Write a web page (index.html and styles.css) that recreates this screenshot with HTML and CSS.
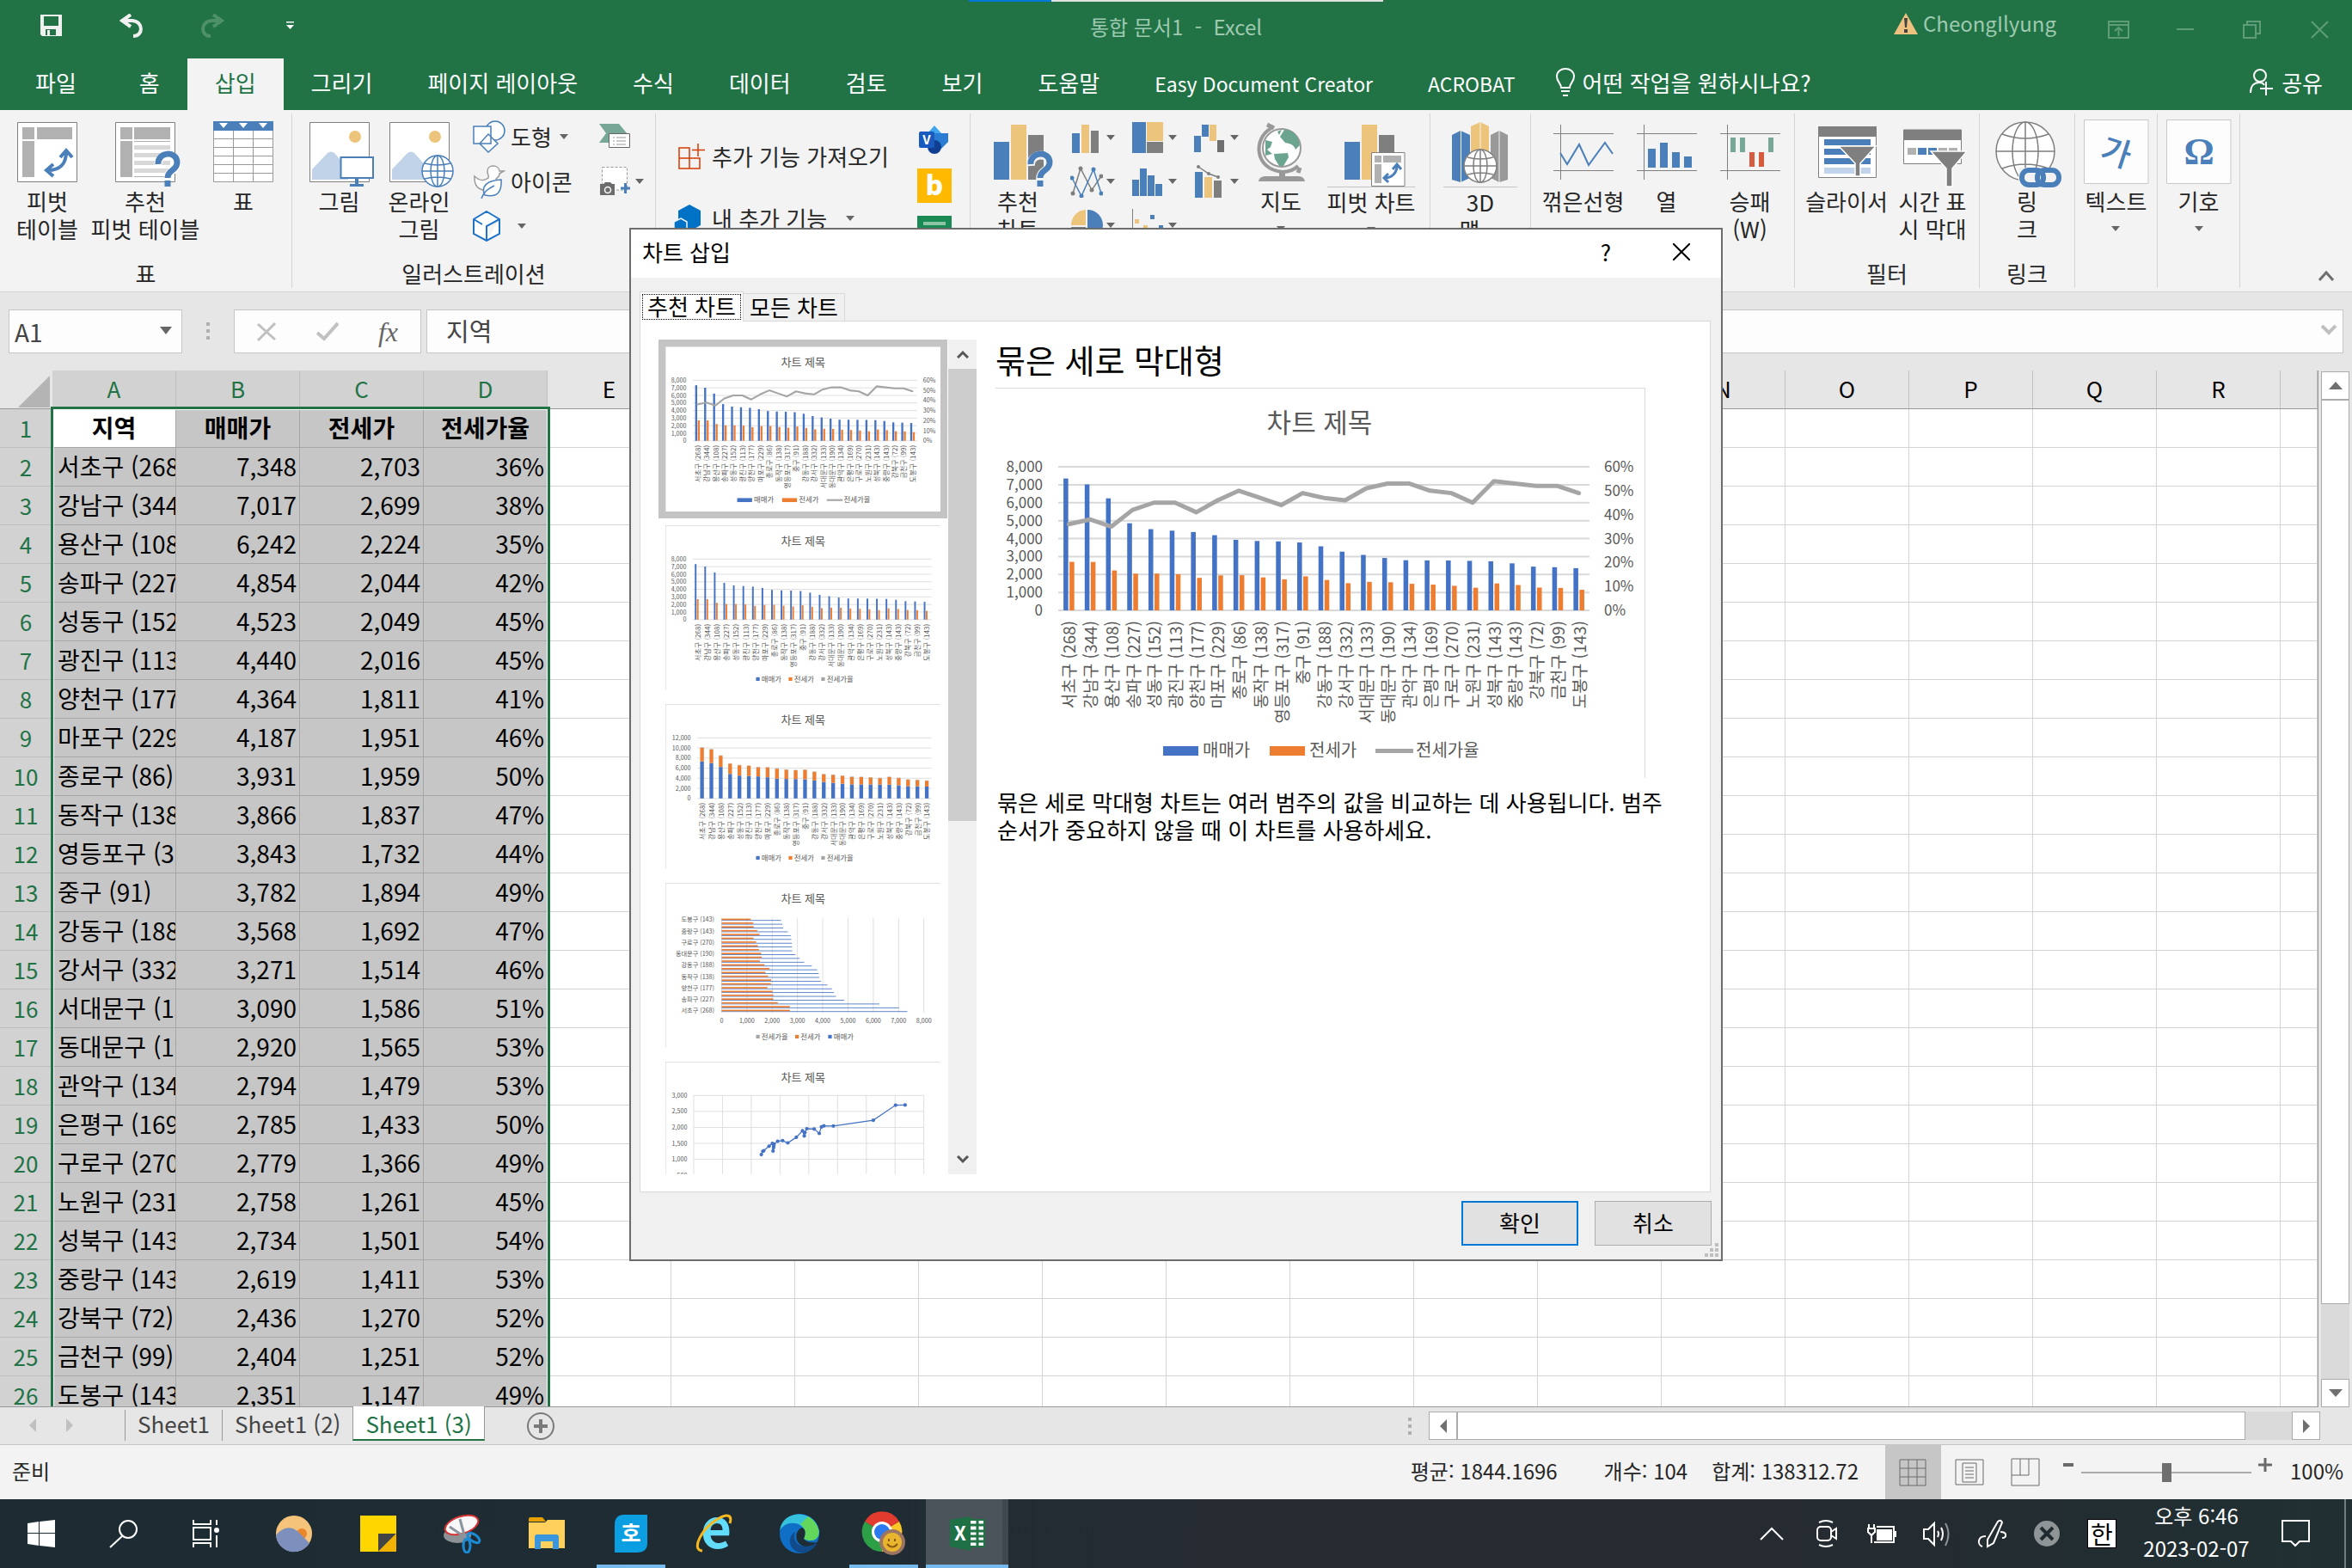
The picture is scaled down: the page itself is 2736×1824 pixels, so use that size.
FILE: index.html
```html
<!DOCTYPE html>
<html lang="ko">
<head>
    <meta charset="UTF-8">
    <meta name="viewport" content="width=device-width, initial-scale=1.0">
    <title>통합 문서1 - Excel</title>
    <link rel="stylesheet" href="styles.css">
</head>
<body>
    <header class="titlebar">
        <div class="progress-strip"><span></span></div>
        <div class="quick-access">
            <button aria-label="저장"><svg width="26" height="26" viewBox="0 0 26 26"><path fill="#f0f0f0" fill-rule="evenodd" d="M0 0H25V25H2L0 23ZM4 2V13H21V2ZM6 17V24H8V18H11V24H18V17Z"/></svg></button>
            <button aria-label="실행 취소"><svg width="28" height="28" viewBox="0 0 28 28"><path d="M13 1L3 8L13 15M4 8H15C28 9 28 26 16 26" fill="none" stroke="#f0f0f0" stroke-width="4"/></svg></button>
            <button aria-label="다시 실행"><svg width="28" height="28" viewBox="0 0 28 28"><path d="M15 1L25 8L15 15M24 8H13C0 9 0 26 12 26" fill="none" stroke="#4d9069" stroke-width="4"/></svg></button>
            <button class="more" aria-label="사용자 지정"><svg width="10" height="10" viewBox="0 0 10 10"><path d="M0 0H9V1.500H0ZM0 4H9L4.500 9Z" fill="#fff"/></svg></button>
        </div>
        <div class="doc-title">통합 문서1&nbsp; -&nbsp; Excel</div>
        <div class="title-right">
            <div class="account">
                <svg width="28" height="25" viewBox="0 0 28 25"><path d="M14 0L28 25H0Z" fill="#eec17e"/><path d="M12 6H16L15 17H13ZM12 19H16V23H12Z" fill="#444"/></svg>
                <span>CheongIlyung</span>
            </div>
            <div class="window-buttons">
                <button aria-label="리본 표시 옵션"><svg width="26" height="22" viewBox="0 0 26 22"><path d="M1 1H24V20H1ZM1 5H24M12.500 18V8M8 12L12.500 8L17 12" /></svg></button>
                <button aria-label="최소화"><svg width="26" height="22" viewBox="0 0 26 22"><path d="M2 10H22"/></svg></button>
                <button aria-label="이전 크기로"><svg width="26" height="22" viewBox="0 0 26 22"><path d="M2 5H16V20H2ZM6 5V1H21V15H16"/></svg></button>
                <button aria-label="닫기"><svg width="26" height="22" viewBox="0 0 26 22"><path d="M3 1L22 20M22 1L3 20"/></svg></button>
            </div>
        </div>
    </header>

    <nav class="tabs">
        <button class="file">파일</button>
        <button>홈</button>
        <button class="active">삽입</button>
        <button>그리기</button>
        <button>페이지 레이아웃</button>
        <button>수식</button>
        <button>데이터</button>
        <button>검토</button>
        <button>보기</button>
        <button>도움말</button>
        <button class="latin">Easy Document Creator</button>
        <button class="latin">ACROBAT</button>
        <button class="tell-me">
            <svg width="24" height="34" viewBox="0 0 24 34"><path d="M7 23C7 18 2 16 2 10C2 -2 22 -2 22 10C22 16 17 18 17 23ZM7 27H17M9 32H15" fill="none" stroke="#fff" stroke-width="2"/></svg>
            어떤 작업을 원하시나요?
        </button>
        <button class="share">
            <svg width="30" height="32" viewBox="0 0 30 32"><path d="M2 28C2 20 6 16 12 16C15 16 17 17 18 19M20 15V31M13 23H28" fill="none" stroke="#fff" stroke-width="2"/><circle cx="13" cy="8" r="7" fill="none" stroke="#fff" stroke-width="2"/></svg>
            공유
        </button>
    </nav>

    <section class="ribbon">
        <div class="group g-tables">
            <div class="group-body">
                <button class="big">
                    <svg class="icon" viewBox="0 0 80 78"><path d="M5.500 1.500H74.500V70.500H5.500Z" fill="#fff" stroke="#7f7f7f"/><path d="M11 7H25V21H11ZM28 7H69V21H28ZM11 23H25V65H11Z" fill="#b1b1b1"/><path d="M41 57C54 57 62 50 62 36M55 42L62 34L69 42M47 50L39 57L47 64" fill="none" stroke="#4a7fb9" stroke-width="4"/></svg>
                    <span>피벗<br>테이블</span>
                </button>
                <button class="big wide">
                    <svg class="icon" viewBox="0 0 80 78"><path d="M5.500 1.500H74.500V70.500H5.500Z" fill="#fff" stroke="#7f7f7f"/><path d="M11 7H25V21H11ZM27 7H69V21H27ZM11 23H25V65H11ZM27 23H69V24H27ZM27 64H69V65H27Z" fill="#b1b1b1"/><path d="M27 28H69V33H27ZM27 37H69V42H27ZM27 46H69V51H27ZM27 55H69V60H27Z" fill="#d8d8d8"/><path d="M55 51C54 37 77 35 77 49C77 59 66 56 66 67" fill="none" stroke="#fff" stroke-width="9"/><path d="M55 50C54 35 77 34 77 48C77 58 66 56 66 66M66 69V76" fill="none" stroke="#4a7fb9" stroke-width="7"/></svg>
                    <span>추천<br>피벗 테이블</span>
                </button>
                <button class="big">
                    <svg class="icon" viewBox="0 0 80 78"><path d="M5.500 1.500H74.500V70.500H5.500ZM5 20.500H75M5 30.500H75M5 40.500H75M5 50.500H75M5 60.500H75M28.500 11V70M51.500 11V70" fill="#fff" stroke="#9a9a9a"/><path d="M5 0H75V11H5Z" fill="#4a7fb9"/><path d="M12 2H22L17 8ZM35 2H45L40 8ZM58 2H68L63 8Z" fill="#fff"/></svg>
                    <span>표</span>
                </button>
            </div>
            <div class="group-name">표</div>
        </div>

        <div class="group g-illust">
            <div class="group-body">
                <button class="big">
                    <svg class="icon" viewBox="0 0 80 78"><path d="M5.500 1.500H74.500V70.500H5.500Z" fill="#fff" stroke="#7f7f7f"/><path d="M8 68V56L26 37Q30 34 34 37L50 55V68Z" fill="#c1d3e8"/><circle cx="58" cy="18" r="7" fill="#edc47b"/><path d="M41.500 42H79V66H41.500Z" fill="#fff" stroke="#4a7fb9" stroke-width="2"/><path d="M58 67H62V73H68V76H52V73H58Z" fill="#4a7fb9"/></svg>
                    <span>그림</span>
                </button>
                <button class="big">
                    <svg class="icon" viewBox="0 0 80 78"><path d="M5.500 1.500H74.500V70.500H5.500Z" fill="#fff" stroke="#7f7f7f"/><path d="M8 68V56L26 37Q30 34 34 37L50 55V68Z" fill="#c1d3e8"/><circle cx="58" cy="18" r="7" fill="#edc47b"/><g fill="none" stroke="#4a7fb9" stroke-width="1.500"><circle cx="61" cy="58" r="18" fill="#fff"/><ellipse cx="61" cy="58" rx="8" ry="18"/><path d="M61 40V76M43 58H79M46 49Q61 53 76 49M46 67Q61 63 76 67"/></g></svg>
                    <span>온라인<br>그림</span>
                </button>
                <div class="small-col illust-a">
                    <button><svg width="38" height="38" viewBox="0 0 38 38" fill="#fff" stroke="#4a7fb9" stroke-width="1.500"><circle cx="26" cy="12" r="11"/><path d="M1 7H21V27H1ZM18 16L29 27L18 37L8 27Z"/></svg>도형<i class="caret"></i></button>
                    <button><svg width="38" height="40" viewBox="0 0 38 40" fill="#fff" stroke-width="1.500"><path d="M2 14C1 30 12 31 20 30C30 29 32 22 27 17C30 15 31 13 31 11L36 8L31 8C30 0 17 0 17 8C17 12 19 13 18 16C13 20 7 19 2 14Z" stroke="#9a9a9a"/><path d="M33 18C34 33 28 39 14 36C9 26 16 19 33 18ZM10 40C13 32 17 29 25 25" stroke="#4a7fb9"/></svg>아이콘</button>
                    <button aria-label="3D 모델"><svg width="38" height="36" viewBox="0 0 38 36" fill="#fff" stroke="#1e73c8" stroke-width="2"><path d="M16 1L31 10V27L16 35L1 27V10ZM1 10L11 16M31 10L16 18V35"/></svg><i class="caret near"></i></button>
                </div>
                <div class="small-col illust-b">
                    <button aria-label="SmartArt"><svg width="38" height="30" viewBox="0 0 38 30"><path d="M0 0H23L33 12L23 22H0L8 11Z" fill="#76a797"/><path d="M11.500 11.500H35.500V27.500H11.500Z" fill="#fff" stroke="#666"/><path d="M16 16H18M20 16H31M16 20H18M20 20H31M16 24H18M20 24H31" stroke="#999"/></svg></button>
                    <button aria-label="스크린샷"><svg width="38" height="36" viewBox="0 0 38 36"><path d="M3.500 1.500H32.500V28H3.500Z" fill="#fff" stroke="#9a9a9a" stroke-dasharray="3 2"/><path d="M1 21H5L7 19H13L15 21H18V34H1Z" fill="#6c6c6c"/><circle cx="10" cy="28" r="3.500" fill="none" stroke="#fff" stroke-width="1.500"/><path d="M25 26H36M30.500 20V32" stroke="#4a7fb9" stroke-width="3"/></svg><i class="caret"></i></button>
                </div>
            </div>
            <div class="group-name">일러스트레이션</div>
        </div>

        <div class="group g-addins">
            <div class="group-body">
                <div class="addin-list">
                    <button><svg width="36" height="34" viewBox="0 0 36 34" fill="none" stroke="#d83b01" stroke-width="1.500"><path d="M6 7H18V31H6ZM6 19H30V31H6M28 2V17M21 9.500H36"/></svg>추가 기능 가져오기</button>
                    <button><svg width="36" height="34" viewBox="0 0 36 34"><path d="M18 1L31 8V25L18 32L5 25V8Z" fill="#0072c6"/><path d="M8 17L15 21V34H0V21Z" fill="#0072c6" stroke="#f3f3f3" stroke-width="1.500"/></svg>내 추가 기능<i class="caret far"></i></button>
                </div>
                <div class="addin-logos">
                    <button aria-label="Visio"><svg width="40" height="36" viewBox="0 0 40 36"><path d="M20 1L28 10V17H12V10Z" fill="#41a5ee"/><path d="M19 10H36V20L28 28L19 20Z" fill="#2b7cd3"/><circle cx="20" cy="26" r="8" fill="#103f91"/><rect x="2" y="8" width="18" height="19" rx="2" fill="#185abd"/><text x="11" y="23" text-anchor="middle" font-size="15" font-weight="700" fill="#fff">V</text></svg></button>
                    <button aria-label="Bing"><svg width="40" height="40" viewBox="0 0 40 40"><rect width="40" height="40" fill="#ffb900"/><text x="20" y="31" text-anchor="middle" font-size="31" font-weight="900" fill="#fff">b</text></svg></button>
                    <button aria-label="양식"><svg width="40" height="40" viewBox="0 0 40 40"><rect width="40" height="40" fill="#1a8a55"/><path d="M7 7H33V11H7Z" fill="#8cc5a6"/></svg></button>
                </div>
            </div>
        </div>

        <div class="group g-charts">
            <div class="group-body">
                <button class="big">
                    <svg class="icon" viewBox="0 0 80 78"><path d="M12 24H30V68H12Z" fill="#4a7fb9"/><path d="M32 4H50V68H32Z" fill="#edc47b"/><path d="M52 16H70V68H52Z" fill="#7f7f7f"/><path d="M55 52C54 37 77 35 77 49C77 59 66 56 66 68" fill="none" stroke="#f3f3f3" stroke-width="10"/><path d="M55 50C54 35 77 34 77 48C77 58 66 56 66 66M66 69V76" fill="none" stroke="#4a7fb9" stroke-width="7"/></svg>
                    <span>추천<br>차트</span>
                </button>
                <div class="chart-kinds">
                    <button aria-label="세로 막대형"><svg viewBox="0 0 38 38"><path d="M2 14H11V37H2Z" fill="#4a7fb9"/><path d="M13 4H22V37H13Z" fill="#edc47b"/><path d="M24 11H33V37H24Z" fill="#7f7f7f"/></svg><i class="caret"></i></button>
                    <button aria-label="계층 구조"><svg viewBox="0 0 38 38"><path d="M0 1H16V37H0Z" fill="#4a7fb9"/><path d="M17 1H36V23H17Z" fill="#edc47b"/><path d="M17 24H36V37H17Z" fill="#7f7f7f"/></svg><i class="caret"></i></button>
                    <button aria-label="폭포"><svg viewBox="0 0 38 38"><path d="M0 17H8V36H0ZM9 4H17V18H9Z" fill="#4a7fb9"/><path d="M18 4H26V23H18Z" fill="#edc47b"/><path d="M27 22H35V36H27Z" fill="#6f6f6f"/></svg><i class="caret"></i></button>
                    <button aria-label="꺾은선형"><svg viewBox="0 0 38 38"><path d="M3 33L12 4L25 29L36 13" fill="none" stroke="#7f7f7f" stroke-width="1.500"/><path d="M2 15L13 36L27 5L36 33" fill="none" stroke="#4a7fb9" stroke-width="1.500"/><g fill="#7f7f7f"><circle cx="3" cy="33" r="2.500"/><circle cx="12" cy="4" r="2.500"/><circle cx="25" cy="29" r="2.500"/><circle cx="36" cy="13" r="2.500"/></g><g fill="#4a7fb9"><circle cx="2" cy="15" r="2.500"/><circle cx="13" cy="36" r="2.500"/><circle cx="27" cy="5" r="2.500"/><circle cx="36" cy="33" r="2.500"/></g></svg><i class="caret"></i></button>
                    <button aria-label="통계"><svg viewBox="0 0 38 38"><path d="M0 17H8V36H0ZM9 4H17V36H9ZM18 12H26V36H18ZM27 22H35V36H27Z" fill="#4a7fb9"/></svg><i class="caret"></i></button>
                    <button aria-label="콤보"><svg viewBox="0 0 38 38"><path d="M1 8H10V38H1Z" fill="#4a7fb9"/><path d="M12 14H21V38H12Z" fill="#edc47b"/><path d="M23 18H32V38H23Z" fill="#7f7f7f"/><path d="M5 2L17 10L28 14" fill="none" stroke="#7f7f7f" stroke-width="1.500"/><g fill="#7f7f7f"><circle cx="5" cy="2" r="2"/><circle cx="17" cy="10" r="2"/><circle cx="28" cy="14" r="2"/></g></svg><i class="caret"></i></button>
                    <button aria-label="원형"><svg viewBox="0 0 38 38"><path d="M18 1A18 18 0 0 0 1 19H18Z" fill="#edc47b"/><path d="M20 1A18 18 0 0 1 20 37Z" fill="#4a7fb9"/><path d="M1 21H18V37A17 17 0 0 1 1 21Z" fill="#7f7f7f"/></svg><i class="caret"></i></button>
                    <button aria-label="분산형"><svg viewBox="0 0 38 38"><path d="M.5 0V37H38" fill="none" stroke="#7f7f7f"/><path d="M3 12H8V17H3ZM13 19H18V24H13Z" fill="#edc47b"/><path d="M21 7H26V12H21ZM31 19H36V24H31Z" fill="#4a7fb9"/></svg><i class="caret"></i></button>
                </div>
                <button class="big">
                    <svg class="icon" viewBox="0 0 80 78"><path d="M24 4L32 8M62 54L60 60" stroke="#999" stroke-width="5"/><path d="M29 8C7 20 9 56 42 59C50 59 56 56 60 52" fill="none" stroke="#999" stroke-width="4"/><circle cx="41" cy="31" r="22" fill="#fff" stroke="#999" stroke-width="2"/><path d="M39 18L44 10C54 9 61 18 62 28L57 33C55 26 49 26 45 25ZM32 38L48 37L49 42L43 52H38L33 44ZM22 22L30 24L28 30L24 33L30 38L22 40ZM36 12L41 10L38 16Z" fill="#6ba58f"/><path d="M38 58H45V64H38ZM14 70C15 64 20 64 26 64H58C64 64 67 65 68 70Z" fill="#999"/></svg>
                    <span>지도<i class="caret"></i></span>
                </button>
                <button class="big split">
                    <svg class="icon" viewBox="0 0 80 78"><path d="M9 24H27V68H9Z" fill="#4a7fb9"/><path d="M29 4H47V68H29Z" fill="#edc47b"/><path d="M49 16H67V36H49Z" fill="#7f7f7f"/><path d="M40.500 36.500H79V75.500H40.500Z" fill="#fff" stroke="#7f7f7f"/><path d="M44 40H52V48H44ZM54 40H75V48H54ZM44 50H52V72H44Z" fill="#b1b1b1"/><path d="M56 66C64 66 70 60 70 52M65 56L70 50L75 56M60 61L55 66L60 71" fill="none" stroke="#4a7fb9" stroke-width="3"/></svg>
                    <span>피벗 차트<i class="caret"></i></span>
                </button>
            </div>
        </div>

        <div class="group g-tours">
            <div class="group-body">
                <button class="big split">
                    <svg class="icon" viewBox="0 0 80 78"><path d="M7 16L17 11L28 16V66L17 71L7 68Z" fill="#4a7fb9"/><path d="M29 6L40 1L50 6V66H29Z" fill="#edc47b"/><path d="M52 16L62 11L72 16V68L62 71L52 66Z" fill="#999"/><path d="M17.500 11V71M40 1V45M62 11V71" stroke="#f3f3f3"/><g fill="none" stroke="#7f7f7f" stroke-width="1.500"><circle cx="40" cy="52" r="19" fill="#fff"/><ellipse cx="40" cy="52" rx="8" ry="19"/><path d="M40 33V71M21 52H59M25 42Q40 46 55 42M25 62Q40 58 55 62"/></g></svg>
                    <span>3D<br>맵 <i class="caret inline"></i></span>
                </button>
            </div>
        </div>

        <div class="group g-spark">
            <div class="group-body">
                <button class="big"><svg class="icon" viewBox="0 0 80 78"><path d="M5 14.500H75M5 57.500H75M13.500 4V68" stroke="#7f7f7f"/><path d="M13 37L21 50L35 27L46 51L65 25L74 38" fill="none" stroke="#4a7fb9" stroke-width="2"/></svg><span>꺾은선형</span></button>
                <button class="big"><svg class="icon" viewBox="0 0 80 78"><path d="M5 14.500H75M5 57.500H75M13.500 4V68" stroke="#7f7f7f"/><path d="M18 32H27V54H18ZM32 25H41V54H32ZM46 36H55V54H46ZM60 41H69V54H60Z" fill="#4a7fb9"/></svg><span>열</span></button>
                <button class="big"><svg class="icon" viewBox="0 0 80 78"><path d="M5 14.500H75M5 57.500H75M13.500 4V68" stroke="#7f7f7f"/><path d="M17 19H23V36H17ZM28 19H34V36H28ZM61 19H67V36H61Z" fill="#76a797"/><path d="M39 36H45V53H39ZM50 36H56V53H50Z" fill="#d65b3e"/></svg><span>승패<br>(W)</span></button>
            </div>
        </div>

        <div class="group g-filter">
            <div class="group-body">
                <button class="big"><svg class="icon" viewBox="0 0 80 78"><path d="M7.500 8V65.500H74.500V8Z" fill="#fff" stroke="#7f7f7f"/><path d="M7 6H75V18H7Z" fill="#7f7f7f"/><path d="M14 21H68V28H14ZM14 32H68V39H14ZM14 43H68V50H14Z" fill="#4a7fb9"/><path d="M14 54H68V61H14Z" fill="#c1d3e8"/><path d="M31 29H74L56 49V64H50V49Z" fill="#7f7f7f" stroke="#fff" stroke-width="1.500"/></svg><span>슬라이서</span></button>
                <button class="big"><svg class="icon" viewBox="0 0 80 78"><path d="M6.500 10H73.500V49.500H6.500Z" fill="#fff" stroke="#7f7f7f"/><path d="M6 10H74V22H6Z" fill="#7f7f7f"/><path d="M11 31H21V39H11ZM47 31H57V39H47ZM59 31H69V39H59Z" fill="#b1b1b1"/><path d="M23 31H33V39H23ZM35 31H45V39H35Z" fill="#4a7fb9"/><path d="M38 35H80L63 55V76H56V55Z" fill="#7f7f7f" stroke="#fff" stroke-width="1.500"/></svg><span>시간 표<br>시 막대</span></button>
            </div>
            <div class="group-name">필터</div>
        </div>

        <div class="group g-link">
            <div class="group-body">
                <button class="big"><svg class="icon" viewBox="0 0 80 78"><g fill="none" stroke="#7f7f7f" stroke-width="1.500"><circle cx="38" cy="35" r="34" fill="#fff"/><ellipse cx="38" cy="35" rx="15" ry="34"/><path d="M38 1V69M4 35H72M11 15Q38 25 65 15M11 55Q38 45 65 55"/></g><path d="M30 54H80V78H30Z" fill="#f3f3f3"/><g fill="none" stroke="#4a7fb9" stroke-width="6"><rect x="34" y="57" width="25" height="17" rx="8"/><rect x="52" y="57" width="25" height="17" rx="8"/></g></svg><span>링<br>크</span></button>
            </div>
            <div class="group-name">링크</div>
        </div>

        <div class="group g-mini">
            <div class="group-body">
                <button class="big"><svg class="icon" viewBox="0 0 80 78"><path d="M2.500 -1.500H77V72.500H2.500Z" fill="#fdfdfd" stroke="#c8c8c8"/><text x="40" y="50" text-anchor="middle" font-size="38" font-weight="500" fill="#4a7fb9" transform="rotate(18 40 36)">가</text></svg><span>텍스트<i class="caret"></i></span></button>
            </div>
        </div>
        <div class="group g-mini">
            <div class="group-body">
                <button class="big"><svg class="icon" viewBox="0 0 80 78"><path d="M2.500 -1.500H77V72.500H2.500Z" fill="#fdfdfd" stroke="#c8c8c8"/><text class="serif" x="40" y="50" text-anchor="middle" font-size="44" font-weight="700" fill="#4a7fb9">Ω</text></svg><span>기호<i class="caret"></i></span></button>
            </div>
        </div>
        <button class="collapse" aria-label="리본 축소"><svg width="18" height="12" viewBox="0 0 18 12"><path d="M1 11L9 2L17 11" fill="none" stroke="#6f6f6f" stroke-width="3"/></svg></button>
    </section>

    <section class="formula-bar">
        <div class="name-box"><input type="text" value="A1" aria-label="이름 상자"><i class="caret"></i></div>
        <div class="dots"><i></i><i></i><i></i></div>
        <div class="fx-box">
            <button aria-label="취소"><svg width="24" height="22" viewBox="0 0 24 22"><path d="M2 2L22 20M22 1L2 21" stroke="#c0c0c0" stroke-width="3"/></svg></button>
            <button aria-label="입력"><svg width="26" height="22" viewBox="0 0 26 22"><path d="M1 12L9 19L25 1" fill="none" stroke="#c0c0c0" stroke-width="4"/></svg></button>
            <button class="fx" aria-label="함수 삽입">fx</button>
        </div>
        <div class="formula-box"><input type="text" value="지역" aria-label="수식 입력줄"><svg width="18" height="12" viewBox="0 0 18 12"><path d="M1 1L9 9L17 1" fill="none" stroke="#c0c0c0" stroke-width="4"/></svg></div>
    </section>

    <main class="sheet">
        <div class="grid-wrap">
            <table id="grid"></table>
            <div class="selection"></div>
        </div>
        <div class="vscroll">
            <button aria-label="위로"><i class="tri up"></i></button>
            <div class="vthumb"></div>
            <div class="vtrack"></div>
            <button aria-label="아래로"><i class="tri down"></i></button>
        </div>
    </main>

    <div class="sheet-tabs">
        <div class="sheet-nav"><i class="tri left"></i><i class="tri right"></i></div>
        <button>Sheet1</button>
        <button>Sheet1 (2)</button>
        <button class="active">Sheet1 (3)</button>
        <button class="add" aria-label="새 시트"><svg width="34" height="34" viewBox="0 0 34 34"><circle cx="17" cy="17" r="15" fill="none" stroke="#7a7a7a" stroke-width="2"/><path d="M9 17H25M17 9V25" stroke="#7a7a7a" stroke-width="4"/></svg></button>
        <div class="dots"><i></i><i></i><i></i></div>
        <div class="hscroll">
            <button aria-label="왼쪽"><i class="tri left"></i></button>
            <div class="hthumb"></div>
            <div class="htrack"></div>
            <button aria-label="오른쪽"><i class="tri right"></i></button>
        </div>
    </div>

    <footer class="status">
        <span class="ready">준비</span>
        <span class="avg">평균: 1844.1696</span>
        <span class="count">개수: 104</span>
        <span class="sum">합계: 138312.72</span>
        <button class="view active" aria-label="기본"><svg width="34" height="34" viewBox="0 0 34 34"><path d="M1 2H31V32H1ZM1 12H31M1 22H31M11 2V32M21 2V32"/></svg></button>
        <button class="view" aria-label="페이지 레이아웃"><svg width="34" height="34" viewBox="0 0 34 34"><path d="M1 2H33V31H1ZM9 6H25V28H9ZM12 11H22M12 15H22M12 19H22M12 23H22"/></svg></button>
        <button class="view" aria-label="페이지 나누기"><svg width="34" height="34" viewBox="0 0 34 34"><path d="M1 1H33V32H1ZM1 20H21V1M11 1V20"/></svg></button>
        <div class="zoom">
            <button aria-label="축소"><svg width="14" height="16" viewBox="0 0 14 16"><path d="M1 8H13" stroke="#6a6a6a" stroke-width="4"/></svg></button>
            <input type="range" min="0" max="100" value="50" aria-label="확대/축소">
            <button aria-label="확대"><svg width="16" height="16" viewBox="0 0 16 16"><path d="M0 8H16M8 0V16" stroke="#6a6a6a" stroke-width="3"/></svg></button>
        </div>
        <span class="percent">100%</span>
    </footer>

    <div class="taskbar">
        <button class="sys" aria-label="시작"><svg width="34" height="34" viewBox="0 0 34 34"><path d="M1 5L14 3V16H1ZM15 3L33 1V16H15ZM1 17H14V31L1 29ZM15 17H33V33L15 31Z" fill="#fff"/></svg></button>
        <button class="sys" aria-label="검색"><svg width="34" height="34" viewBox="0 0 34 34" fill="none" stroke="#fff" stroke-width="2"><circle cx="22" cy="12" r="10"/><path d="M15 20L1 33"/></svg></button>
        <button class="sys" aria-label="작업 보기"><svg width="34" height="34" viewBox="0 0 34 34" fill="none" stroke="#fff" stroke-width="2"><path d="M2 1V6H22V1M2 10H22V24H2ZM2 33V28H22V33M29 1V7M29 19V33"/><circle cx="29" cy="13" r="2" fill="#fff"/></svg></button>
        <button aria-label="위젯"><svg width="44" height="44" viewBox="0 0 44 44"><circle cx="22" cy="22" r="21" fill="#f5c37a"/><circle cx="31" cy="22" r="6" fill="#e9862c"/><path d="M1 24C10 13 20 13 28 21L40 33A21 21 0 0 1 1 24Z" fill="#7d8fbd"/></svg></button>
        <button aria-label="스티커 메모"><svg width="44" height="44" viewBox="0 0 44 44"><path d="M1 1H43V43H1Z" fill="#ffd700"/><path d="M22 43V22H43L22 43Z" fill="#444"/><path d="M22 43L43 22V43Z" fill="#f3b200"/></svg></button>
        <button aria-label="캡처 도구"><svg width="46" height="46" viewBox="0 0 46 46"><ellipse cx="17" cy="25" rx="16" ry="9" fill="#8d9297"/><ellipse cx="22" cy="13" rx="20" ry="10" transform="rotate(-18 22 13)" fill="#f8f8f8" stroke="#d83434" stroke-width="2"/><path d="M8 15L30 30M20 6L26 28" stroke="#8b949c" stroke-width="3"/><ellipse cx="36" cy="28" rx="8" ry="4" transform="rotate(35 36 28)" fill="none" stroke="#1b8bd6" stroke-width="3"/><ellipse cx="28" cy="37" rx="4" ry="8" fill="none" stroke="#1b8bd6" stroke-width="3"/></svg></button>
        <button aria-label="파일 탐색기"><svg width="44" height="40" viewBox="0 0 44 40"><path d="M1 3Q1 1 3 1H17L21 6H1Z" fill="#e59f00"/><path d="M1 7H20L23 4H43V37H1Z" fill="#ffd15c"/><path d="M8 38V24Q8 21 11 21H33Q36 21 36 24V38H29V29H15V38Z" fill="#3a96dd"/></svg></button>
        <button class="running" aria-label="한글"><svg width="40" height="46" viewBox="0 0 40 46"><path d="M12 1H39V34Q39 45 27 45H1V13Q1 1 12 1Z" fill="#0b9ee0"/><text x="20" y="32" text-anchor="middle" font-size="25" font-weight="700" fill="#fff">호</text></svg></button>
        <button aria-label="Internet Explorer"><svg width="46" height="46" viewBox="0 0 46 46"><text x="24" y="40" text-anchor="middle" font-size="62" font-weight="700" fill="#63dcfa">e</text><path d="M8 43C-6 42 8 16 26 6C38 -1 43 2 40 11" fill="none" stroke="#f6b91e" stroke-width="3"/></svg></button>
        <button aria-label="Edge"><svg width="48" height="48" viewBox="0 0 48 48"><circle cx="24" cy="24" r="23" fill="#0f6fc6"/><path d="M1 21C4 -6 44 -4 47 22C47 31 38 34 29 30C35 19 23 8 9 13C5 15 2 18 1 21Z" fill="#35c1dc"/><path d="M34 4C47 12 50 26 42 31C38 33 32 32 29 30C33 23 29 15 25 13Z" fill="#62d75c"/><path d="M19 22C14 34 27 45 44 35C38 48 22 50 15 40C11 33 13 25 19 22Z" fill="#114a8b"/><path d="M27 17C18 20 17 36 30 39C36 39 41 37 44 35C50 33 33 37 29 30C31 25 32 19 27 17Z" fill="#1e2d35"/></svg></button>
        <button class="running" aria-label="Chrome"><svg width="52" height="52" viewBox="0 0 52 52"><path d="M24 24L4 12A23 23 0 0 1 44 12Z" fill="#e33b2e"/><path d="M24 24L44 12A23 23 0 0 1 24 47Z" fill="#fcc629"/><path d="M24 24L24 47A23 23 0 0 1 4 12Z" fill="#2c9f47"/><circle cx="24" cy="24" r="12" fill="#fff"/><circle cx="24" cy="24" r="9" fill="#2b7af0"/><circle cx="36" cy="36" r="15" fill="#9c7462"/><circle cx="36" cy="36" r="11" fill="#e9b52f"/><path d="M32 32V35M39 32V35M30 38Q36 45 42 38" fill="none" stroke="#8a5a10" stroke-width="2"/></svg></button>
        <button class="current" aria-label="Excel"><svg width="42" height="42" viewBox="0 0 42 42"><path d="M24 5H41V36H24Z" fill="#fff" stroke="#217346" stroke-width="2"/><path d="M24 11H41M24 18H41M24 24H41M24 30H41M33 5V36" stroke="#217346" stroke-width="3"/><path d="M1 5L25 1V41L1 36Z" fill="#1e7145"/><text x="13" y="29" text-anchor="middle" font-size="22" font-weight="700" fill="#fff">X</text></svg></button>

        <div class="tray">
            <button aria-label="숨겨진 아이콘"><svg width="34" height="34" viewBox="0 0 34 34"><path d="M4 24L17 11L30 24"/></svg></button>
            <button aria-label="모임"><svg width="34" height="34" viewBox="0 0 34 34"><rect x="6" y="9" width="16" height="16" rx="4"/><path d="M22 15L28 11V23L22 19M8 4Q16 0 24 4M8 30Q16 34 24 30"/></svg></button>
            <button aria-label="배터리"><svg width="34" height="34" viewBox="0 0 34 34"><path d="M11 9H31V27H8"/><path d="M11 12H29V25H11ZM31 14H34V21H31Z" fill="#fff" stroke="none"/><path d="M2 6V12M8 6V12M1 11H9V15L5 19L1 15ZM5 19V28"/></svg></button>
            <button aria-label="볼륨"><svg width="34" height="34" viewBox="0 0 34 34"><path d="M2 12H7L14 5V30L7 23H2ZM18 14Q20 17 18 21M22 10Q26 17 22 25"/><path d="M27 5Q34 17 27 31" stroke="#8b9093"/></svg></button>
            <button aria-label="펜"><svg width="34" height="34" viewBox="0 0 34 34"><path d="M12 32L12 24L24 3Q27 0 29 4L19 28ZM10 20C0 20 0 30 6 32M27 15C35 15 35 22 29 22"/></svg></button>
            <button aria-label="오류"><svg width="34" height="34" viewBox="0 0 34 34"><circle cx="17" cy="17" r="15" fill="#8f9496" stroke="none"/><path d="M10 10L24 24M24 10L10 24" stroke="#1f2b30" stroke-width="4"/></svg></button>
            <button class="ime">한</button>
            <div class="clock"><span>오후 6:46</span><span>2023-02-07</span></div>
            <button class="notice" aria-label="알림"><svg width="34" height="34" viewBox="0 0 34 34"><path d="M1 2H32V26H21L16 31L11 26H1Z"/></svg></button>
        </div>
    </div>

    <!-- Insert chart window -->
    <div class="overlay">
        <div class="dialog" role="dialog" aria-label="차트 삽입">
            <div class="dialog-title">
                <span>차트 삽입</span>
                <button aria-label="도움말">?</button>
                <button aria-label="닫기"><svg width="20" height="20" viewBox="0 0 20 20"><path d="M0 0L20 20M20 0L0 20" stroke="#000" stroke-width="2"/></svg></button>
            </div>
            <div class="dialog-tabs">
                <button class="active"><span>추천 차트</span></button>
                <button>모든 차트</button>
            </div>
            <div class="panel">
                <div class="thumbs">
                    <div class="thumb selected"><svg id="thumb-combo" viewBox="0 0 755 453"></svg></div>
                    <div class="thumb"><svg id="thumb-cluster" viewBox="0 0 755 453"></svg></div>
                    <div class="thumb"><svg id="thumb-stack" viewBox="0 0 755 453"></svg></div>
                    <div class="thumb"><svg id="thumb-bar" viewBox="0 0 755 453"></svg></div>
                    <div class="thumb"><svg id="thumb-scatter" viewBox="0 0 755 453"></svg></div>
                </div>
                <div class="thumb-scroll">
                    <button aria-label="위로"><svg width="14" height="10" viewBox="0 0 14 10"><path d="M1 9L7 3L13 9" fill="none" stroke="#555" stroke-width="3"/></svg></button>
                    <div class="thumb-scroll-bar"></div>
                    <button aria-label="아래로"><svg width="14" height="10" viewBox="0 0 14 10"><path d="M1 1L7 7L13 1" fill="none" stroke="#555" stroke-width="3"/></svg></button>
                </div>
                <div class="preview">
                    <h2>묶은 세로 막대형</h2>
                    <div class="preview-chart"><svg id="preview" viewBox="0 0 755 453"></svg></div>
                    <p>묶은 세로 막대형 차트는 여러 범주의 값을 비교하는 데 사용됩니다. 범주 순서가 중요하지 않을 때 이 차트를 사용하세요.</p>
                </div>
            </div>
            <div class="dialog-buttons">
                <button class="default">확인</button>
                <button>취소</button>
            </div>
            <svg class="grip" width="16" height="16" viewBox="0 0 16 16"><path d="M12 0H16V4H12ZM6 6H10V10H6ZM12 6H16V10H12ZM0 12H4V16H0ZM6 12H10V16H6ZM12 12H16V16H12Z" fill="#bfbfbf"/></svg>
        </div>
    </div>

    <script src="script.js"></script>
</body>
</html>
```
FILE: styles.css
```css
* {
    box-sizing: border-box;
}
body {
    margin: 0;
    height: 100vh;
    display: flex;
    flex-direction: column;
    overflow: hidden;
    background: #e6e6e6;
    font-family: "Noto Sans CJK KR", "Noto Sans", sans-serif;
    font-size: 26px;
    line-height: 32px;
    color: #262626;
}
button {
    margin: 0;
    padding: 0;
    border: none;
    background: none;
    color: inherit;
    font: inherit;
    white-space: nowrap;
}
input {
    font: inherit;
    color: inherit;
    border: none;
    outline: none;
    background: none;
    padding: 0;
    min-width: 0;
}
svg {
    display: block;
    flex-shrink: 0;
}
.caret {
    display: block;
    border: 5px solid transparent;
    border-top: 6px solid #666;
    border-bottom: none;
}
.tri {
    display: block;
    border: 8px solid transparent;
}
.tri.up { border-bottom: 9px solid #6f6f6f; border-top: none; }
.tri.down { border-top: 9px solid #6f6f6f; border-bottom: none; }
.tri.left { border-right: 8px solid #6f6f6f; border-left: none; }
.tri.right { border-left: 8px solid #6f6f6f; border-right: none; }
.dots {
    display: flex;
    flex-direction: column;
    gap: 4px;
}
.dots i {
    width: 4px;
    height: 4px;
    background: #b0b0b0;
}

/* Title bar */
.titlebar {
    position: relative;
    height: 68px;
    flex-shrink: 0;
    display: grid;
    grid-template-columns: 1fr auto 1fr;
    align-items: start;
    background: #217346;
    color: #9fc9b0;
    font-size: 24px;
}
.progress-strip {
    position: absolute;
    top: 0;
    left: 1127px;
    width: 482px;
    height: 2px;
    background: #e0e0e0;
}
.progress-strip span {
    display: block;
    width: 96px;
    height: 2px;
    background: #0078d7;
}
.quick-access {
    display: flex;
    align-items: center;
    gap: 66px;
    height: 60px;
    padding-left: 47px;
}
.quick-access .more {
    margin-left: 6px;
}
.doc-title {
    line-height: 62px;
    white-space: pre;
}
.title-right {
    display: flex;
    justify-content: flex-end;
    gap: 60px;
}
.account {
    display: flex;
    align-items: center;
    gap: 6px;
    height: 54px;
}
.window-buttons {
    display: flex;
    gap: 52px;
    width: 284px;
    padding-top: 16px;
    flex-shrink: 0;
}
.window-buttons svg path {
    fill: none;
    stroke: #5f9c78;
    stroke-width: 2;
}

/* Ribbon tabs */
.tabs {
    height: 60px;
    flex-shrink: 0;
    display: flex;
    background: #217346;
    color: #fff;
}
.tabs button {
    padding: 0 32px 4px;
}
.tabs .file {
    padding: 0 41px 4px;
}
.tabs .active {
    background: #f3f3f3;
    color: #217346;
}
.tabs .latin {
    font-size: 23px;
    padding-bottom: 2px;
}
.tabs .tell-me {
    padding: 0 14px 4px;
}
.tabs .tell-me, .tabs .share {
    display: flex;
    align-items: center;
    gap: 8px;
}
.tabs .share {
    margin-left: auto;
    padding-right: 34px;
}

/* Ribbon */
.ribbon {
    height: 212px;
    flex-shrink: 0;
    display: flex;
    background: #f3f3f3;
    border-bottom: 1px solid #d2d2d2;
    padding: 4px 0;
}
.group {
    position: relative;
    flex-shrink: 0;
    display: flex;
    flex-direction: column;
    justify-content: space-between;
    border-right: 1px solid #d4d4d4;
}
.group-body {
    display: flex;
    height: 170px;
    padding-top: 9px;
}
.group-name {
    height: 33px;
    line-height: 32px;
    text-align: center;
}
.big {
    display: flex;
    flex-direction: column;
    align-items: center;
}
.big > span {
    margin-top: -1px;
}
.icon {
    width: 80px;
    height: 78px;
    overflow: visible;
}
.big > span .caret {
    margin: 13px auto 0;
    width: 10px;
}
.big > span .caret.inline {
    display: inline-block;
    margin: 0 0 4px 8px;
}
.split > span {
    border-top: 1px solid #c6c6c6;
    margin-top: -2px;
    padding-top: 1px;
}
.g-tables { width: 340px; }
.g-tables .group-body { padding-left: 4px; }
.g-tables .big { width: 102px; }
.g-tables .wide { width: 126px; }
.g-illust { width: 423px; }
.g-illust .group-body { padding-left: 8px; }
.g-illust .big { width: 93px; }
.g-addins { width: 366px; }
.g-charts { width: 535px; }
.g-charts .group-body { padding-left: 14px; }
.g-charts .big { width: 82px; }
.g-charts .split { width: 128px; }
.g-tours { width: 117px; }
.g-tours .big { width: 116px; }
.g-tours .big > span { width: 86px; }
.g-spark { width: 307px; }
.g-spark .group-body { padding-left: 12px; }
.g-spark .big { width: 97px; }
.g-filter { width: 215px; }
.g-filter .group-body { padding-left: 10px; }
.g-filter .big { width: 100px; }
.g-link { width: 111px; }
.g-link .big { width: 110px; }
.g-mini { width: 96px; }
.g-mini .big { width: 96px; }
.serif { font-family: "Liberation Serif", serif; }

.small-col {
    display: flex;
    flex-direction: column;
}
.small-col button {
    display: flex;
    align-items: center;
    gap: 6px;
    height: 52px;
    margin-top: -8px;
    margin-bottom: 8px;
}
.illust-a {
    width: 148px;
    padding-left: 16px;
}
.illust-a .caret { margin-left: 3px; }
.illust-a .near { margin-left: 8px; }
.illust-b { padding-left: 15px; }
.illust-b button { gap: 4px; }
.illust-a, .illust-b { flex-shrink: 0; }
.addin-list {
    width: 304px;
    padding: 16px 0 0 21px;
}
.addin-list button {
    display: flex;
    align-items: center;
    gap: 8px;
    height: 50px;
    margin-bottom: 22px;
}
.addin-list .far { margin-left: 14px; }
.addin-logos {
    display: flex;
    flex-direction: column;
    gap: 15px;
    padding-top: 4px;
}
.chart-kinds {
    display: grid;
    grid-template-columns: 72px 72px 60px;
    grid-auto-rows: 51px;
    margin-left: 20px;
    align-items: start;
}
.chart-kinds button {
    display: flex;
    align-items: center;
    gap: 4px;
}
.chart-kinds svg {
    width: 38px;
    height: 38px;
}
.collapse {
    margin-left: auto;
    padding: 0 21px 8px 0;
    align-self: flex-end;
}

/* Formula bar */
.formula-bar {
    height: 91px;
    flex-shrink: 0;
    display: flex;
    align-items: flex-start;
    padding: 20px 10px 0;
    font-size: 28px;
    color: #444;
}
.name-box, .fx-box, .formula-box {
    height: 51px;
    display: flex;
    align-items: center;
    background: #fdfdfd;
    border: 1px solid #c6c6c6;
}
.name-box {
    width: 202px;
    padding: 0 11px 0 6px;
}
.name-box input { flex: 1; }
.name-box .caret {
    border-width: 9px 7px 0;
    margin-bottom: 2px;
}
.formula-bar .dots {
    width: 4px;
    margin: 15px 28px;
}
.fx-box {
    width: 218px;
    justify-content: space-between;
    padding: 0 26px 0 25px;
    margin-right: 6px;
}
.fx {
    font-family: "Liberation Serif", serif;
    font-style: italic;
    font-size: 32px;
    color: #666;
}
.formula-box {
    flex: 1;
    padding: 0 7px 4px 22px;
}
.formula-box input {
    flex: 1;
    font-size: 29px;
}

/* Sheet */
.sheet {
    flex: 1;
    min-height: 0;
    display: flex;
    margin-bottom: -1px;
}
.grid-wrap {
    position: relative;
    flex: 1;
    overflow: hidden;
    background: #fff;
    border-right: 1px solid #999;
    border-bottom: 1px solid #999;
}
#grid {
    width: 100%;
    table-layout: fixed;
    border-spacing: 0;
    font-size: 28px;
    color: #000;
}
#grid th {
    font-weight: 400;
    font-size: 26px;
    padding: 0;
    background: #e6e6e6;
}
#grid thead th {
    height: 45px;
    border-right: 1px solid #c0c0c0;
    border-bottom: 1px solid #999;
    line-height: 34px;
    padding-bottom: 2px;
}
#grid thead .corner {
    border-right: none;
    padding: 4px 0 0;
}
.corner i {
    display: block;
    width: 0;
    margin: 0 0 0 21px;
    border-left: 37px solid transparent;
    border-bottom: 37px solid #b4b4b4;
}
#grid tbody th {
    border-right: 1px solid #999;
    border-bottom: 1px solid #bdbdbd;
}
#grid .picked {
    background: #d2d2d2;
    color: #217346;
}
#grid td {
    height: 45px;
    padding: 0 3px 3px 6px;
    line-height: 40px;
    overflow: hidden;
    white-space: nowrap;
    border-right: 1px solid #d4d4d4;
    border-bottom: 1px solid #d4d4d4;
}
#grid td.sel {
    background: #c6c6c6;
    border-color: #a6a6a6;
}
#grid td.num { text-align: right; }
#grid td.head {
    text-align: center;
    font-weight: 700;
    padding: 0 0 3px;
}
#grid td.cursor { background: #fff; }
.selection {
    position: absolute;
    left: 59px;
    top: 42px;
    width: 581px;
    bottom: -4px;
    border: 3px solid #217346;
    box-shadow: inset 0 0 0 1px #fff;
}
.vscroll {
    width: 39px;
    padding: 1px 3px 0;
    display: flex;
    flex-direction: column;
}
.vscroll button, .hscroll button {
    display: flex;
    align-items: center;
    justify-content: center;
    width: 33px;
    height: 33px;
    background: #fff;
    border: 1px solid #ababab;
}
.vthumb {
    flex: 12;
    background: #fff;
    border: 1px solid #ababab;
}
.vtrack {
    flex: 1;
    background: #dadada;
}

/* Sheet tabs */
.sheet-tabs {
    height: 45px;
    flex-shrink: 0;
    display: flex;
    align-items: flex-start;
    border-bottom: 1px solid #c6c6c6;
    padding-right: 37px;
    color: #444;
}
.sheet-tabs > button {
    margin-top: 4px;
    height: 36px;
    line-height: 32px;
    padding: 0 14px 4px;
    border-left: 1px solid #999;
}
.sheet-tabs > .active {
    position: relative;
    margin-top: 0;
    height: 40px;
    padding-top: 4px;
    background: #fff;
    color: #217346;
    border-right: 1px solid #999;
    border-bottom: 2px solid #217346;
}
.sheet-tabs > .add {
    padding: 2px 0 0;
    margin-left: 48px;
    border: none;
}
.sheet-nav {
    display: flex;
    gap: 35px;
    width: 145px;
    padding: 14px 0 0 34px;
}
.sheet-nav .tri.left { border-right-color: #c0c0c0; }
.sheet-nav .tri.right { border-left-color: #c0c0c0; }
.sheet-tabs .dots {
    margin: 13px 20px 0 auto;
}
.hscroll {
    display: flex;
    flex: 0 0 1037px;
    height: 33px;
    margin-top: 6px;
    background: #dadada;
}
.hthumb {
    flex: 17;
    background: #fff;
    border: 1px solid #ababab;
}
.htrack { flex: 1; }

/* Status bar */
.status {
    height: 63px;
    flex-shrink: 0;
    display: flex;
    align-items: center;
    background: #f3f3f3;
    font-size: 24px;
}
.status span { margin-bottom: 3px; }
.status .ready { padding-left: 14px; }
.status .avg { margin-left: auto; }
.status .count { margin-left: 54px; }
.status .sum { margin: 0 31px 3px 28px; }
.view {
    display: flex;
    align-items: center;
    justify-content: center;
    width: 65px;
    height: 63px;
}
.view.active { background: #c6c6c6; }
.view path {
    fill: none;
    stroke: #6a6a6a;
    stroke-width: 1;
}
.zoom {
    display: flex;
    margin-left: 11px;
    gap: 8px;
    align-items: flex-start;
}
.zoom button { margin-top: -6px; }
.zoom input {
    appearance: none;
    width: 198px;
    height: 22px;
    margin: 0;
    background: linear-gradient(#ababab, #ababab) center / 100% 2px no-repeat;
}
.zoom input::-webkit-slider-thumb {
    appearance: none;
    width: 11px;
    height: 22px;
    background: #6f6f6f;
}
.percent {
    width: 93px;
    padding-left: 21px;
}

/* Taskbar */
.taskbar {
    height: 80px;
    flex-shrink: 0;
    display: flex;
    background: linear-gradient(90deg, #1d2b33, #1f2c34 35%, #272b31 55%, #242b31 80%, #203032);
    color: #fff;
}
.taskbar > button {
    display: flex;
    align-items: center;
    justify-content: center;
    width: 98px;
    height: 80px;
}
.taskbar > .sys { width: 96px; }
.taskbar > .sys:nth-child(3) { margin-right: 5px; }
.taskbar > .running {
    background: linear-gradient(#76b9ed, #76b9ed) bottom / 80px 4px no-repeat;
}
.taskbar > .current {
    width: 96px;
    padding-top: 4px;
    background: #4b545b;
    border-bottom: 4px solid #76b9ed;
    box-shadow: inset -7px 0 #40484d;
}
.tray {
    margin-left: auto;
    display: flex;
    align-items: center;
    gap: 30px;
    padding-right: 7px;
    font-size: 24px;
}
.tray svg {
    fill: none;
    stroke: #fff;
    stroke-width: 2;
}
.ime {
    width: 34px;
    height: 34px;
    background: #fff;
    color: #000;
    border: 1px solid #000;
    font-size: 28px;
    line-height: 30px;
}
.clock {
    display: flex;
    flex-direction: column;
    align-items: center;
    width: 126px;
    line-height: 38px;
    padding-bottom: 4px;
}
.notice {
    padding: 0 39px 0 6px;
    height: 80px;
    border-right: 2px solid #70797c;
}

/* Insert chart window */
.overlay {
    position: absolute;
    top: 265px;
    left: 0;
    right: 0;
    display: flex;
    justify-content: center;
}
.dialog {
    position: relative;
    width: 1272px;
    border: 2px solid #6d6d6d;
    background: #f0f0f0;
    color: #000;
    padding-bottom: 16px;
}
.dialog-title {
    display: flex;
    align-items: center;
    gap: 72px;
    height: 56px;
    background: #fff;
    padding: 0 36px 4px 13px;
}
.dialog-title span { flex: 1; }
.dialog-tabs {
    display: flex;
    align-items: flex-end;
    margin: 16px 10px 0;
    height: 35px;
}
.dialog-tabs button {
    height: 33px;
    line-height: 28px;
    padding: 0 7px 2px;
    border: 1px solid #d9d9d9;
    border-left: none;
}
.dialog-tabs .active {
    position: relative;
    height: 35px;
    padding: 2px;
    background: #fff;
    border: 1px solid #d9d9d9;
    border-bottom: none;
}
.dialog-tabs .active span {
    display: block;
    height: 30px;
    line-height: 26px;
    padding: 0 5px;
    border: 1px dotted #000;
}
.panel {
    display: flex;
    margin: -1px 12px 0 10px;
    padding: 21px 0 20px 21px;
    background: #fff;
    border: 1px solid #d9d9d9;
}
.thumbs {
    width: 336px;
    height: 971px;
    overflow: hidden;
    margin-right: 1px;
}
.thumb {
    padding: 8px;
    height: 208px;
}
.thumb.selected { background: #c4c4c4; }
.thumb svg {
    width: 320px;
    height: 192px;
    background: #fff;
    border-top: 1px solid #e2e2e2;
    border-left: 1px solid #e8e8e8;
}
.thumb-scroll {
    width: 33px;
    display: flex;
    flex-direction: column;
    background: #f0f0f0;
}
.thumb-scroll button {
    height: 34px;
    display: flex;
    align-items: center;
    justify-content: center;
}
.thumb-scroll-bar {
    height: 526px;
    margin-bottom: auto;
    background: #cdcdcd;
}
.preview {
    flex: 1;
    padding-left: 22px;
}
.preview h2 {
    margin: 0 0 10px;
    font-size: 38px;
    font-weight: 400;
    line-height: 46px;
}
.preview-chart {
    width: 756px;
    border-top: 1px solid #d9d9d9;
    border-right: 1px solid #d9d9d9;
}
.preview p {
    margin: 12px 0 0 2px;
    width: 800px;
    word-break: keep-all;
}
svg text {
    font-family: "Noto Sans CJK KR", "Noto Sans", sans-serif;
}
svg text.serif {
    font-family: "Liberation Serif", serif;
}
.chart-title { font-size: 31px; fill: #595959; text-anchor: middle; }
.axis { font-size: 17px; fill: #595959; }
.category { font-size: 19px; fill: #595959; text-anchor: end; }
.legend { font-size: 20px; fill: #595959; }
.end { text-anchor: end; }
.mid { text-anchor: middle; }
.gridline { stroke: #d9d9d9; stroke-width: 2; }
.dialog-buttons {
    display: flex;
    justify-content: flex-end;
    gap: 19px;
    padding: 10px 11px 0;
}
.dialog-buttons button {
    width: 136px;
    height: 52px;
    padding-bottom: 3px;
    background: #e1e1e1;
    border: 1px solid #adadad;
}
.dialog-buttons .default { border: 2px solid #0078d7; }
.grip {
    position: absolute;
    right: 3px;
    bottom: 3px;
}
```
FILE: script.js
```js
// name, price, deposit, ratio
const rows = [
    ['서초구 (268)', 7348, 2703, 36],
    ['강남구 (344)', 7017, 2699, 38],
    ['용산구 (108)', 6242, 2224, 35],
    ['송파구 (227)', 4854, 2044, 42],
    ['성동구 (152)', 4523, 2049, 45],
    ['광진구 (113)', 4440, 2016, 45],
    ['양천구 (177)', 4364, 1811, 41],
    ['마포구 (229)', 4187, 1951, 46],
    ['종로구 (86)', 3931, 1959, 50],
    ['동작구 (138)', 3866, 1837, 47],
    ['영등포구 (317)', 3843, 1732, 44],
    ['중구 (91)', 3782, 1894, 49],
    ['강동구 (188)', 3568, 1692, 47],
    ['강서구 (332)', 3271, 1514, 46],
    ['서대문구 (133)', 3090, 1586, 51],
    ['동대문구 (190)', 2920, 1565, 53],
    ['관악구 (134)', 2794, 1479, 53],
    ['은평구 (169)', 2785, 1433, 50],
    ['구로구 (270)', 2779, 1366, 49],
    ['노원구 (231)', 2758, 1261, 45],
    ['성북구 (143)', 2734, 1501, 54],
    ['중랑구 (143)', 2619, 1411, 53],
    ['강북구 (72)', 2436, 1270, 52],
    ['금천구 (99)', 2404, 1251, 52],
    ['도봉구 (143)', 2351, 1147, 49]
];
const BLUE = '#4472c4';
const ORANGE = '#ed7d31';
const GRAY = '#a5a5a5';
const fmt = n => n.toLocaleString('en-US');

// Build the worksheet
function buildGrid() {
    const letters = 'ABCDEFGHIJKLMNOPQR'.split('');
    let html = '<colgroup><col style="width:61px">' + '<col style="width:144px">'.repeat(18) + '<col></colgroup>';
    html += '<thead><tr><th class="corner"><i></i></th>';
    letters.forEach((l, i) => html += `<th class="${i < 4 ? 'picked' : ''}">${l}</th>`);
    html += '<th></th></tr></thead><tbody>';
    const empty = '<td></td>'.repeat(15);
    html += '<tr><th class="picked">1</th><td class="sel head cursor">지역</td><td class="sel head">매매가</td><td class="sel head">전세가</td><td class="sel head">전세가율</td>' + empty + '</tr>';
    rows.forEach((r, i) => {
        html += `<tr><th class="picked">${i + 2}</th><td class="sel">${r[0]}</td><td class="sel num">${fmt(r[1])}</td><td class="sel num">${fmt(r[2])}</td><td class="sel num">${r[3]}%</td>${empty}</tr>`;
    });
    document.getElementById('grid').innerHTML = html + '</tbody>';
}

// SVG helpers
const text = (x, y, cls, s) => `<text x="${x}" y="${y}" class="${cls}">${s}</text>`;
const rect = (x, y, w, h, fill) => `<rect x="${x}" y="${y}" width="${w}" height="${h}" fill="${fill}"/>`;
const line = (x1, y1, x2, y2) => `<line x1="${x1}" y1="${y1}" x2="${x2}" y2="${y2}" class="gridline"/>`;
const title = () => text(377, 51, 'chart-title', '차트 제목');

// Horizontal grid lines with their value labels, from y=91 down to y=258
function valueAxis(left, right, max, step) {
    let s = '';
    for (let v = 0; v <= max; v += step) {
        const y = 258 - v / max * 167;
        s += line(left, y, right, y) + text(left - 18, y + 6, 'axis end', fmt(v));
    }
    return s;
}

function categories(left, slot) {
    return rows.map((r, i) => {
        const x = left + slot * (i + 0.5) + 8;
        return `<text class="category" transform="translate(${x} 270) rotate(-90)">${r[0]}</text>`;
    }).join('');
}

function squareLegend(items) {
    return items.map(([x, name, color]) => rect(x, 417, 10, 10, color) + text(x + 15, 429, 'legend', name)).join('');
}

function comboChart() {
    const left = 73, right = 691, slot = (right - left) / 25, w = slot / 4.46;
    let s = title() + valueAxis(left, right, 8000, 1000);
    for (let p = 0; p <= 60; p += 10) {
        s += text(708, 264 - p / 60 * 167, 'axis', p + '%');
    }
    const points = [];
    rows.forEach((r, i) => {
        const x = left + slot * i + w * 1.1;
        const h1 = r[1] / 8000 * 167, h2 = r[2] / 8000 * 167;
        s += rect(x, 258 - h1, w, h1, BLUE) + rect(x + w * 1.27, 258 - h2, w, h2, ORANGE);
        points.push(`${left + slot * (i + 0.5)},${258 - r[3] / 60 * 167}`);
    });
    s += `<polyline points="${points.join(' ')}" fill="none" stroke="${GRAY}" stroke-width="5" stroke-linejoin="round" stroke-linecap="round"/>`;
    s += categories(left, slot);
    s += rect(195, 416, 41, 11, BLUE) + text(241, 428, 'legend', '매매가');
    s += rect(319, 416, 41, 11, ORANGE) + text(365, 428, 'legend', '전세가');
    s += rect(442, 419, 44, 5, GRAY) + text(489, 428, 'legend', '전세가율');
    return s;
}

function clusterChart() {
    const left = 73, right = 731, slot = (right - left) / 25, w = slot / 5.73;
    let s = title() + valueAxis(left, right, 8000, 1000);
    rows.forEach((r, i) => {
        const x = left + slot * i + w * 1.1;
        const h1 = r[1] / 8000 * 167, h2 = r[2] / 8000 * 167;
        s += rect(x, 258 - h1, w, h1, BLUE) + rect(x + w * 1.27, 258 - h2, w, h2, ORANGE);
    });
    return s + categories(left, slot) + squareLegend([[247, '매매가', BLUE], [337, '전세가', ORANGE], [427, '전세가율', GRAY]]);
}

function stackChart() {
    const left = 85, right = 731, slot = (right - left) / 25, w = slot / 2.5;
    let s = title() + valueAxis(left, right, 12000, 2000);
    rows.forEach((r, i) => {
        const x = left + slot * i + w * 0.75;
        const h1 = r[1] / 12000 * 167, h2 = r[2] / 12000 * 167;
        s += rect(x, 258 - h1, w, h1, BLUE) + rect(x, 258 - h1 - h2, w, h2, ORANGE) + rect(x, 257 - h1 - h2, w, 1, GRAY);
    });
    return s + categories(left, slot) + squareLegend([[247, '매매가', BLUE], [337, '전세가', ORANGE], [427, '전세가율', GRAY]]);
}

function barChart() {
    const left = 152, top = 94, bottom = 356, slot = (bottom - top) / 25;
    let s = title();
    for (let v = 0; v <= 8000; v += 1000) {
        const x = left + v / 8000 * 558;
        s += line(x, top, x, bottom) + text(x, 385, 'axis mid', fmt(v));
    }
    rows.forEach((r, i) => {
        const y = bottom - slot * (i + 0.5);
        s += rect(left, y + 1, r[1] / 8000 * 558, 2, BLUE) + rect(left, y - 3, r[2] / 8000 * 558, 4, ORANGE);
        if (i % 3 === 0) s += text(132, y + 6, 'axis end', r[0]);
    });
    return s + squareLegend([[247, '전세가율', GRAY], [355, '전세가', ORANGE], [446, '매매가', BLUE]]);
}

function scatterChart() {
    const left = 75, right = 710, top = 91, bottom = 355;
    let s = title();
    for (let v = 0; v <= 3000; v += 500) {
        const y = bottom - v / 3000 * 264;
        s += line(left, y, right, y) + text(left - 18, y + 6, 'axis end', fmt(v));
    }
    for (let i = 0; i <= 8; i++) {
        const x = left + i / 8 * (right - left);
        s += line(x, top, x, bottom);
    }
    const pts = rows.map(r => [left + r[1] / 8000 * (right - left), bottom - r[2] / 3000 * 264]);
    s += `<polyline points="${pts.join(' ')}" fill="none" stroke="${BLUE}" stroke-width="3"/>`;
    pts.forEach(p => s += `<circle cx="${p[0]}" cy="${p[1]}" r="5" fill="${BLUE}"/>`);
    return s;
}

buildGrid();
document.getElementById('preview').innerHTML = comboChart();
document.getElementById('thumb-combo').innerHTML = comboChart();
document.getElementById('thumb-cluster').innerHTML = clusterChart();
document.getElementById('thumb-stack').innerHTML = stackChart();
document.getElementById('thumb-bar').innerHTML = barChart();
document.getElementById('thumb-scatter').innerHTML = scatterChart();
```
